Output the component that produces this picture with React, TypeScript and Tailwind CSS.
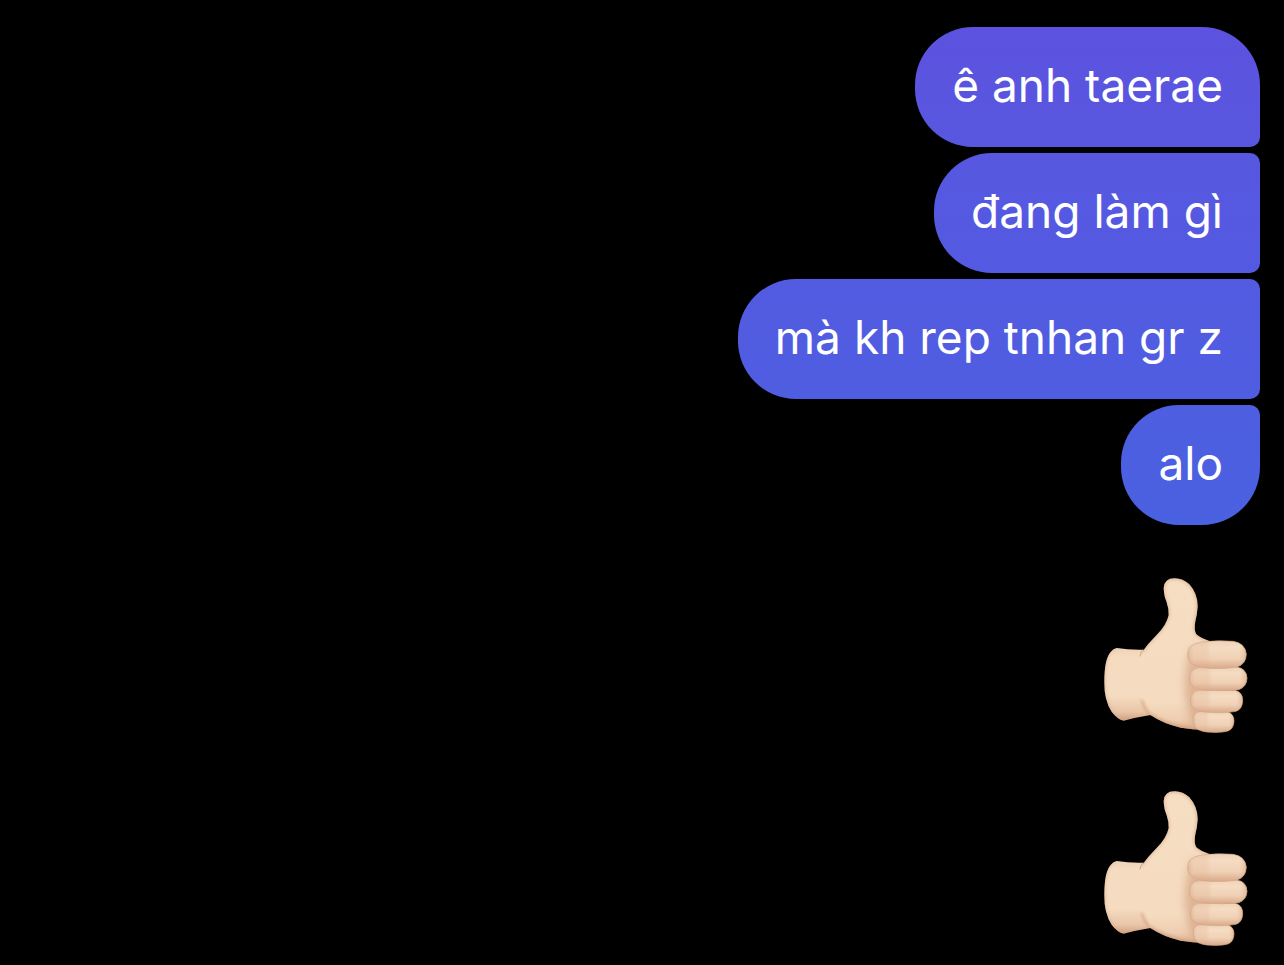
import { useId } from 'react';
import clsx from 'clsx';

interface Message {
  text: string;
  shape: string;
  fill: string;
}

const messages: Message[] = [
  {
    text: 'ê anh taerae',
    shape: 'rounded-tr-[58px] rounded-br-[10px]',
    fill: 'from-[#5c52df] to-[#5857e0]',
  },
  {
    text: 'đang làm gì',
    shape: 'rounded-r-[10px]',
    fill: 'from-[#5757e0] to-[#535ae1]',
  },
  {
    text: 'mà kh rep tnhan gr z',
    shape: 'rounded-r-[10px]',
    fill: 'from-[#525be1] to-[#4f5de1]',
  },
  {
    text: 'alo',
    shape: 'rounded-tr-[10px] rounded-br-[58px]',
    fill: 'from-[#4e5ee1] to-[#4a61e1]',
  },
];

const likes = ['like-1', 'like-2'];

// knuckles are listed bottom up so each finger overlaps the one below it
const fingers = [
  'M328 440 H412 Q432 446 432 468 Q431 490 416 497 Q400 503 365 502 Q330 501 318 489 Q308 474 309 456 Q313 442 328 440 Z',
  'M326 376 H436 Q458 382 458 407 Q457 432 438 439 Q400 446 345 441 Q314 438 304 422 Q298 405 304 391 Q311 378 326 376 Z',
  'M326 308 L440 306 Q470 310 471 340 Q470 366 446 374 Q400 380 342 375 Q308 371 300 354 Q295 337 302 322 Q311 309 326 308 Z',
  'M335 231 Q385 225 430 229 Q465 234 469 267 Q468 297 442 306 Q395 314 337 308 Q302 301 295 282 Q289 260 301 245 Q313 234 335 231 Z',
];

const palm =
  'M222 82 Q217 50 240 41 Q273 34 298 58 Q323 86 323 124 Q322 145 316 169 Q311 195 319 208 Q330 219 364 230 L398 260 L400 430 L345 495 Q306 494 272 488 Q222 477 181 450 L154 404 L154 264 Q174 236 202 208 Q229 181 236 151 Q237 132 230 112 Q223 96 222 82 Z';

const wrist =
  'M80 249 Q118 255 158 254 L205 300 L200 430 L181 450 Q139 457 101 467 Q82 463 65 440 Q42 405 43 350 Q43 282 62 261 Q70 250 80 249 Z';

function ThumbsUp() {
  const id = useId().replace(/[^a-zA-Z0-9]/g, '');

  return (
    <svg viewBox="30 30 450 480" className="h-[160px] w-[150px]" aria-hidden="true">
      <defs>
        <linearGradient id={`${id}wrist`} x1="0" y1="0" x2="0" y2="1">
          <stop offset="0" stopColor="#efd3b6" />
          <stop offset="0.12" stopColor="#f5dcc0" />
          <stop offset="0.65" stopColor="#f5dcc0" />
          <stop offset="0.88" stopColor="#e9c5a7" />
          <stop offset="1" stopColor="#cf9f7e" />
        </linearGradient>
        <linearGradient id={`${id}palm`} gradientUnits="userSpaceOnUse" x1="0" y1="40" x2="0" y2="500">
          <stop offset="0" stopColor="#f6dec3" />
          <stop offset="0.8" stopColor="#f5dcc0" />
          <stop offset="0.92" stopColor="#efceb1" />
          <stop offset="1" stopColor="#dcae8c" />
        </linearGradient>
        <linearGradient id={`${id}finger`} x1="0" y1="0" x2="0" y2="1">
          <stop offset="0" stopColor="#efd2b6" />
          <stop offset="0.25" stopColor="#f5dcc2" />
          <stop offset="0.65" stopColor="#f0d1b6" />
          <stop offset="1" stopColor="#d8a988" />
        </linearGradient>
        <linearGradient id={`${id}knuckle`} x1="0" y1="0" x2="1" y2="0">
          <stop offset="0" stopColor="#c98f6c" stopOpacity="0.4" />
          <stop offset="0.1" stopColor="#dba988" stopOpacity="0.22" />
          <stop offset="0.32" stopColor="#dba988" stopOpacity="0.2" />
          <stop offset="0.4" stopColor="#dba988" stopOpacity="0" />
          <stop offset="0.88" stopColor="#dba988" stopOpacity="0" />
          <stop offset="1" stopColor="#cf9b78" stopOpacity="0.45" />
        </linearGradient>
        <filter id={`${id}soft`} x="-50%" y="-30%" width="200%" height="160%">
          <feGaussianBlur stdDeviation="13" />
        </filter>
        <filter id={`${id}edge`} x="-30%" y="-30%" width="160%" height="160%">
          <feGaussianBlur stdDeviation="4" />
        </filter>
        <clipPath id={`${id}palmClip`}>
          <path d={palm} />
        </clipPath>
        <clipPath id={`${id}wristClip`}>
          <path d={wrist} />
        </clipPath>
      </defs>

      <path d={wrist} fill={`url(#${id}wrist)`} />
      <g clipPath={`url(#${id}wristClip)`}>
        <path
          d="M80 249 Q44 254 43 350 Q42 440 101 467"
          fill="none"
          stroke="#d9ab8a"
          strokeWidth="6"
          opacity="0.6"
          filter={`url(#${id}edge)`}
        />
      </g>

      <path d={palm} fill={`url(#${id}palm)`} />
      <g clipPath={`url(#${id}palmClip)`}>
        <path
          d="M181 450 Q222 477 272 488 Q306 494 345 495"
          fill="none"
          stroke="#c99370"
          strokeWidth="12"
          opacity="0.6"
          filter={`url(#${id}edge)`}
        />
        <path
          d="M306 245 Q284 300 284 365 Q288 430 310 485 L345 480 L345 250 Z"
          fill="#cf9876"
          opacity="0.6"
          filter={`url(#${id}soft)`}
        />
        <path
          d="M240 41 Q273 34 298 58 Q323 86 323 124 Q322 145 316 169 Q311 195 319 208 Q330 219 364 230"
          fill="none"
          stroke="#cf9c79"
          strokeWidth="8"
          opacity="0.6"
          filter={`url(#${id}edge)`}
        />
        <path
          d="M240 41 Q217 50 222 82 Q223 96 230 112 Q237 132 236 151 Q229 181 202 208 Q174 236 154 264"
          fill="none"
          stroke="#d6a585"
          strokeWidth="7"
          opacity="0.6"
          filter={`url(#${id}edge)`}
        />
      </g>
      <path d="M158 254 Q153 262 150 273" fill="none" stroke="#d6a080" strokeWidth="3" strokeLinecap="round" />
      <path
        d="M156 404 Q162 430 181 448"
        fill="none"
        stroke="#cf9a78"
        strokeWidth="6"
        opacity="0.8"
        filter={`url(#${id}edge)`}
      />

      {fingers.map((finger) => (
        <g key={finger}>
          <path d={finger} fill={`url(#${id}finger)`} stroke="#d6a787" strokeWidth="2" />
          <path d={finger} fill={`url(#${id}knuckle)`} />
        </g>
      ))}
    </svg>
  );
}

function Bubble({ text, shape, fill }: Message) {
  return (
    <li
      className={clsx(
        'flex min-h-[120px] items-center rounded-l-[58px] bg-linear-to-b px-[37px] pb-1 text-[46px] text-white',
        shape,
        fill
      )}
    >
      <p>{text}</p>
    </li>
  );
}

export default function App() {
  return (
    <main className="min-h-screen bg-black px-6 pt-[27px] pb-4 font-['Inter','Noto_Sans',sans-serif]">
      <ul className="flex flex-col items-end gap-[6px]">
        {messages.map((message) => (
          <Bubble key={message.text} {...message} />
        ))}
      </ul>

      <ul className="mt-[50px] flex flex-col items-end gap-[53px] pr-[10px]">
        {likes.map((like) => (
          <li key={like} role="img" aria-label="Thumbs up">
            <ThumbsUp />
          </li>
        ))}
      </ul>
    </main>
  );
}
